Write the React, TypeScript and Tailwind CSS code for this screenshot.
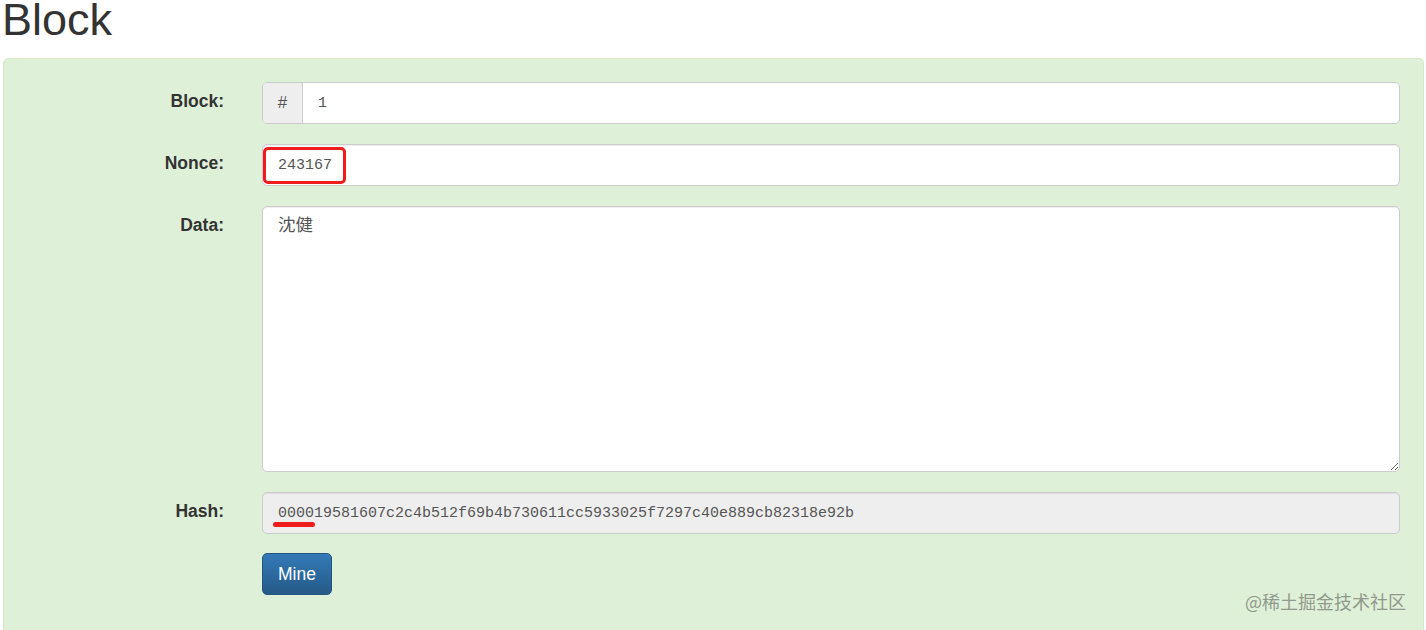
import React from 'react';

const mono = { fontFamily: '"Liberation Mono", "Noto Sans CJK SC", monospace' };

const Label: React.FC<{ text: string }> = ({ text }) => (
  <div className="w-[220px] shrink-0 pt-[7px] text-right text-[17.5px] font-bold leading-[24px] text-[#333]">
    {text}
  </div>
);

export default function App() {
  const hash = '000019581607c2c4b512f69b4b730611cc5933025f7297c40e889cb82318e92b';

  return (
    <div className="relative min-h-[630px] overflow-hidden bg-white pl-[3px] pr-[2px] font-['Liberation_Sans',Arial,sans-serif] text-[#333]">
      <h1 className="-ml-[1px] mb-[18px] text-[45px] font-normal leading-[40px] text-[#333]">Block</h1>

      <div className="rounded-[5px] border border-[#d6e9c6] bg-[#dff0d8] pt-[23px] pr-[23px] pb-[40px]">
        <div className="flex flex-col gap-[20px]">
          {/* Block */}
          <div className="flex gap-[38px]">
            <Label text="Block:" />
            <div className="flex h-[42px] flex-1 overflow-hidden rounded-[5px] border border-[#ccc] bg-white">
              <div className="flex w-[40px] items-center justify-center border-r border-[#ccc] bg-[#eee] text-[17px] text-[#555]">
                #
              </div>
              <div className="flex items-center pl-[15px] pt-[2px] text-[15px] text-[#555]" style={mono}>
                1
              </div>
            </div>
          </div>

          {/* Nonce */}
          <div className="flex gap-[38px]">
            <Label text="Nonce:" />
            <div className="relative flex h-[42px] flex-1 items-center rounded-[5px] border border-[#ccc] bg-white pl-[15px] pt-[2px] text-[15px] text-[#555] shadow-[inset_0_1px_1px_rgba(0,0,0,0.075)]" style={mono}>
              243167
              <div className="absolute left-0 top-[2px] h-[37px] w-[83px] rounded-[5px] border-[3px] border-[#ee1c1c]" />
            </div>
          </div>

          {/* Data */}
          <div className="flex gap-[38px]">
            <Label text="Data:" />
            <textarea
              readOnly
              defaultValue="沈健"
              className="h-[266px] flex-1 resize-y rounded-[5px] border border-[#ccc] bg-white px-[15px] py-[7px] text-[17.5px] leading-[24px] text-[#555] shadow-[inset_0_1px_1px_rgba(0,0,0,0.075)] outline-none"
              style={mono}
            />
          </div>

          {/* Hash */}
          <div className="flex gap-[38px]">
            <Label text="Hash:" />
            <div className="relative flex h-[42px] flex-1 items-center rounded-[5px] border border-[#ccc] bg-[#eee] pl-[15px] pt-[2px] text-[15px] text-[#555] shadow-[inset_0_1px_1px_rgba(0,0,0,0.075)]" style={mono}>
              {hash}
              <div className="absolute left-[10px] top-[29px] h-[5px] w-[42px] rounded-full bg-[#ee1c1c]" />
            </div>
          </div>

          {/* Mine */}
          <div className="-mt-[1px] flex gap-[38px]">
            <div className="w-[220px] shrink-0" />
            <button className="h-[42px] w-[70px] rounded-[5px] border border-[#245580] bg-gradient-to-b from-[#337ab7] to-[#265a88] text-[17.5px] text-white">
              Mine
            </button>
          </div>
        </div>
      </div>

      <div className="absolute right-[20px] top-[589px] text-[18px] leading-[24px] text-[#8f9a8c] font-['Noto_Sans_CJK_SC',sans-serif]">
        @稀土掘金技术社区
      </div>
    </div>
  );
}
